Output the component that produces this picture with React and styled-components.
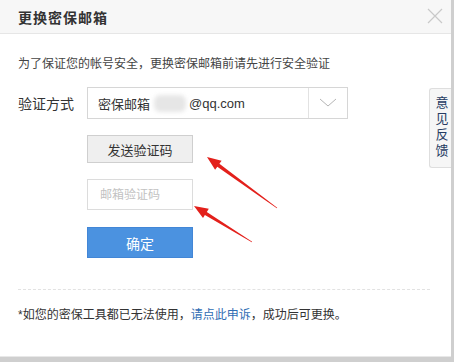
import React from 'react';
import styled, { createGlobalStyle } from 'styled-components';

const Global = createGlobalStyle`
  html, body {
    margin: 0;
    padding: 0;
    background: #cfcfcf;
  }
  body {
    font-family: "Liberation Sans", "Noto Sans CJK SC", sans-serif;
    color: #333;
  }
`;

const Dialog = styled.div`
  position: relative;
  width: 451px;
  height: 356px;
  background: #fff;
  border-bottom: 1px solid #e8e8e8;
`;

const Header = styled.div`
  display: flex;
  align-items: center;
  justify-content: space-between;
  height: 33px;
  padding: 0 8px 0 18px;
  background: #f7f7f7;
  border-bottom: 1px solid #e6e6e6;
`;

const Title = styled.h2`
  margin: 0;
  font-size: 14px;
  font-weight: bold;
  color: #333;
  letter-spacing: 1px;
`;

const Close = styled.button`
  border: none;
  background: none;
  padding: 0;
  width: 16px;
  height: 16px;
  display: flex;
  margin-top: -2px;
`;

const Body = styled.div`
  padding: 21px 18px 0;
`;

const Notice = styled.p`
  margin: 0;
  font-size: 12px;
  line-height: 18px;
  color: #444;
`;

const FormRow = styled.div`
  display: flex;
  align-items: center;
  margin-top: 14px;
`;

const Label = styled.span`
  width: 69px;
  font-size: 14px;
  color: #333;
`;

const Select = styled.div`
  display: flex;
  width: 261px;
  height: 32px;
  box-sizing: border-box;
  border: 1px solid #d6d6d6;
`;

const SelectValue = styled.div`
  flex: 1;
  display: flex;
  align-items: center;
  padding-left: 10px;
  font-size: 13px;
  color: #333;
`;

const Blur = styled.span`
  display: inline-block;
  width: 32px;
  height: 17px;
  margin: 0 3px 0 4px;
  background: #e6e6e6;
  border-radius: 6px;
  filter: blur(2px);
`;

const Caret = styled.div`
  width: 38px;
  display: flex;
  align-items: center;
  justify-content: center;
  border-left: 1px solid #e2e2e2;
`;

const Stack = styled.div`
  display: flex;
  flex-direction: column;
  align-items: flex-start;
  margin: 16px 0 0 69px;
`;

const GrayButton = styled.button`
  width: 106px;
  height: 28px;
  box-sizing: border-box;
  border: 1px solid #cfcfcf;
  background: #efefef;
  font-family: inherit;
  font-size: 13px;
  color: #333;
  padding: 0;
`;

const CodeInput = styled.input`
  width: 106px;
  height: 31px;
  box-sizing: border-box;
  margin-top: 16px;
  border: 1px solid #dcdcdc;
  padding: 0 12px;
  font-family: inherit;
  font-size: 12px;
  outline: none;
  &::placeholder {
    color: #c2c2c2;
  }
`;

const PrimaryButton = styled.button`
  width: 106px;
  height: 31px;
  box-sizing: border-box;
  margin-top: 17px;
  border: 1px solid #4286d6;
  background: #4b92e0;
  color: #fff;
  font-family: inherit;
  font-size: 14px;
  padding: 0;
`;

const Divider = styled.hr`
  margin: 31px 21px 0 18px;
  border: none;
  border-top: 1px dashed #e2e2e2;
`;

const Footnote = styled.p`
  margin: 16px 0 0 18px;
  font-size: 12px;
  line-height: 18px;
  color: #333;
`;

const Link = styled.a`
  color: #2f6db3;
  text-decoration: none;
`;

const FeedbackTab = styled.div`
  position: absolute;
  top: 88px;
  right: 0;
  width: 22px;
  height: 80px;
  box-sizing: border-box;
  border: 1px solid #dedede;
  border-right: none;
  border-radius: 3px 0 0 3px;
  background: #f6f6f6;
  display: flex;
  align-items: center;
  justify-content: center;
  writing-mode: vertical-rl;
  font-size: 13px;
  line-height: 16px;
  letter-spacing: 3px;
  color: #263c63;
`;

const Annotations = styled.svg`
  position: absolute;
  left: 0;
  top: 0;
  pointer-events: none;
`;

function arrowPoints([tx, ty], [hx, hy]) {
  const dx = hx - tx;
  const dy = hy - ty;
  const len = Math.hypot(dx, dy);
  const ux = dx / len;
  const uy = dy / len;
  const nx = -uy;
  const ny = ux;
  const nkx = hx - ux * 14;
  const nky = hy - uy * 14;
  const pts = [
    [tx + nx * 0.4, ty + ny * 0.4],
    [nkx + nx * 1.8, nky + ny * 1.8],
    [nkx + nx * 5.5, nky + ny * 5.5],
    [hx, hy],
    [nkx - nx * 5.5, nky - ny * 5.5],
    [nkx - nx * 1.8, nky - ny * 1.8],
    [tx - nx * 0.4, ty - ny * 0.4],
  ];
  return pts.map(p => p.map(v => v.toFixed(1)).join(',')).join(' ');
}

export default function App() {
  return (
    <>
      <Global />
      <Dialog>
        <Header>
          <Title>更换密保邮箱</Title>
          <Close aria-label="关闭">
            <svg width="16" height="16" viewBox="0 0 16 16">
              <path d="M1 1L15 15M15 1L1 15" stroke="#c9c9c9" strokeWidth="1.2" />
            </svg>
          </Close>
        </Header>
        <Body>
          <Notice>为了保证您的帐号安全，更换密保邮箱前请先进行安全验证</Notice>
          <FormRow>
            <Label>验证方式</Label>
            <Select>
              <SelectValue>
                密保邮箱<Blur />@qq.com
              </SelectValue>
              <Caret>
                <svg width="18" height="10" viewBox="0 0 18 10">
                  <path d="M1 1L9 8L17 1" fill="none" stroke="#b5b5b5" strokeWidth="1" />
                </svg>
              </Caret>
            </Select>
          </FormRow>
          <Stack>
            <GrayButton>发送验证码</GrayButton>
            <CodeInput placeholder="邮箱验证码" />
            <PrimaryButton>确定</PrimaryButton>
          </Stack>
        </Body>
        <Divider />
        <Footnote>
          *如您的密保工具都已无法使用，<Link href="#">请点此申诉</Link>，成功后可更换。
        </Footnote>
        <FeedbackTab>意见反馈</FeedbackTab>
        <Annotations width="451" height="356">
          <polygon points={arrowPoints([277, 208], [207, 157])} fill="#e3201b" />
          <polygon points={arrowPoints([252, 242], [194, 206])} fill="#e3201b" />
        </Annotations>
      </Dialog>
    </>
  );
}
